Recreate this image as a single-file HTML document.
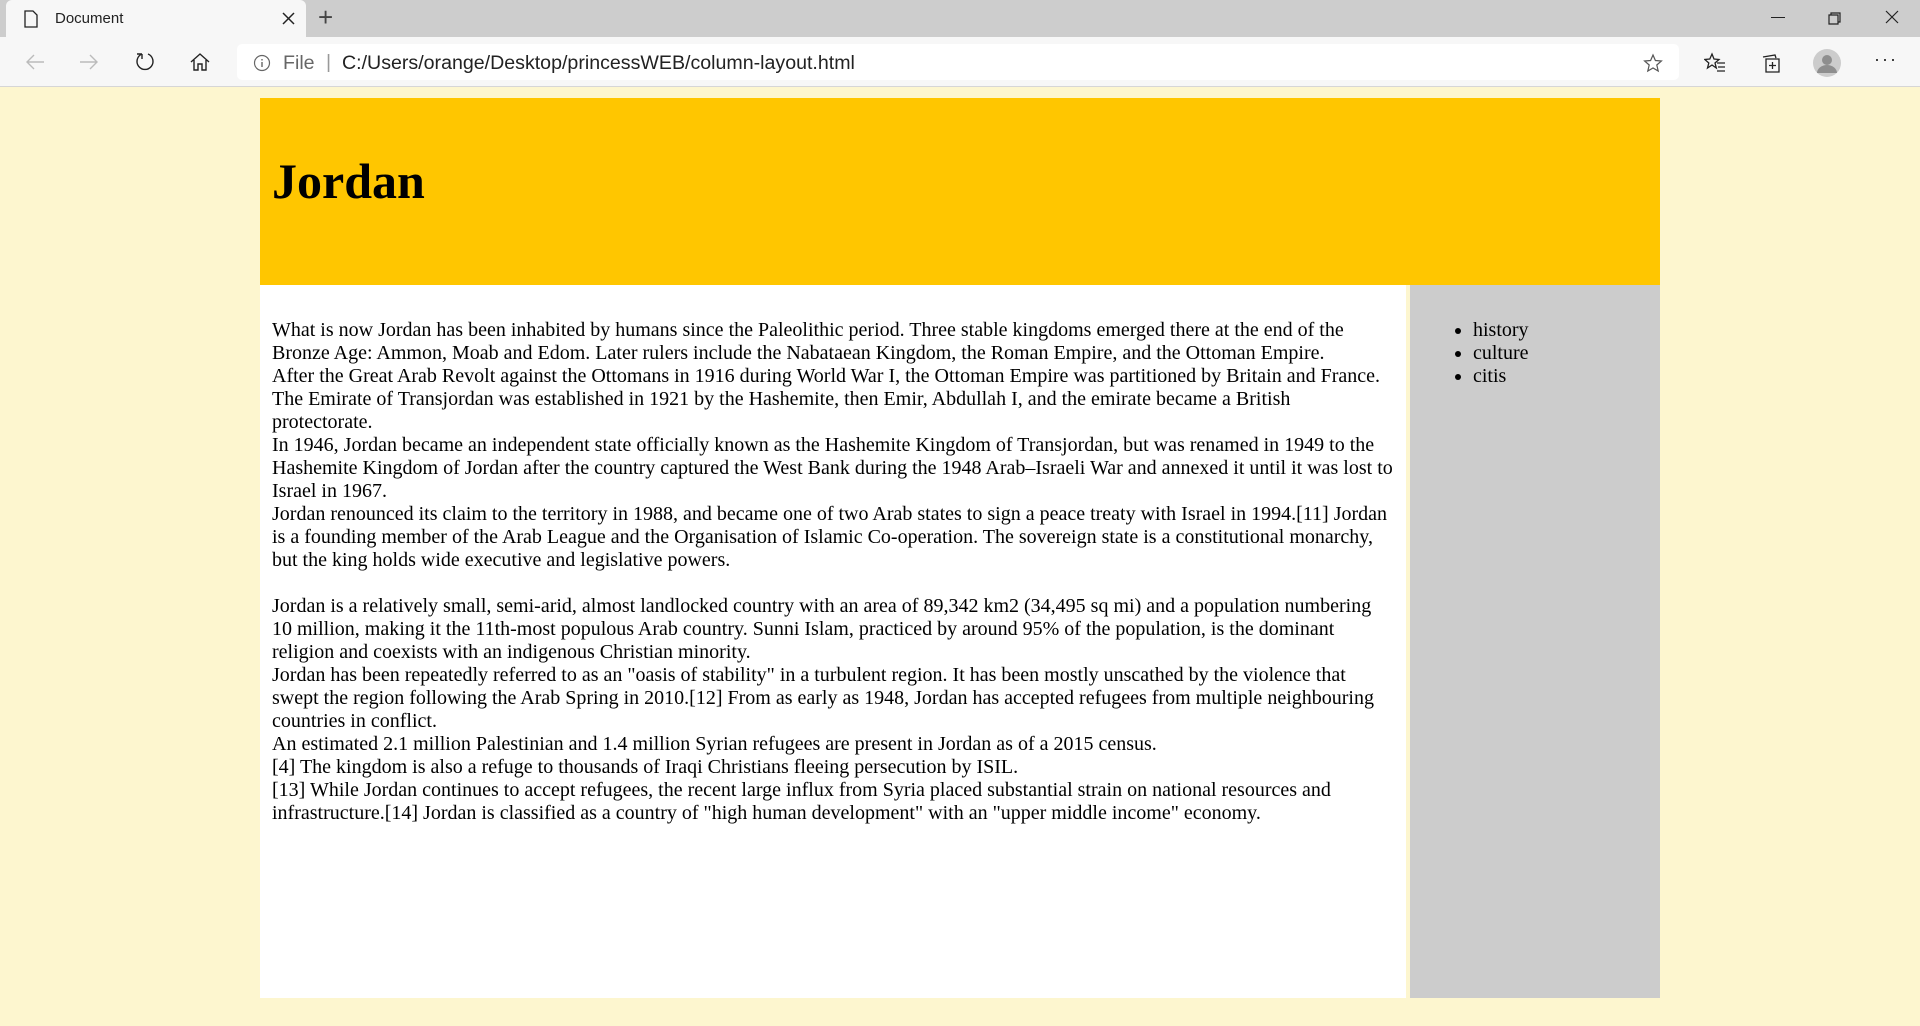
<!DOCTYPE html>
<html><head><meta charset="utf-8"><style>
*{margin:0;padding:0;box-sizing:border-box}
html,body{width:1920px;height:1026px;overflow:hidden;background:#fdf6cf;font-family:"Liberation Serif",serif}
.tabbar{position:absolute;left:0;top:0;width:1920px;height:37px;background:#cdcdcd}
.tab{position:absolute;left:6px;top:0;width:300px;height:38px;background:#f7f7f7;border-radius:6px 6px 0 0;font-family:"Liberation Sans",sans-serif;font-size:15px;color:#222}
.nav{position:absolute;left:0;top:37px;width:1920px;height:50px;background:#f7f7f7;border-bottom:1px solid #d6d6d6}
.addr{position:absolute;left:237px;top:7px;width:1442px;height:36px;background:#fff;border-radius:5px;font-family:"Liberation Sans",sans-serif;font-size:19.6px;color:#222}
.ic{position:absolute}
.header{position:absolute;left:260px;top:98px;width:1400px;height:187px;background:#ffc600}
.header h1{position:absolute;left:12px;top:55px;font-size:50px;line-height:56px;font-weight:bold;color:#000}
.main{position:absolute;left:260px;top:285px;width:1146px;height:713px;background:#fff}
.side{position:absolute;left:1410px;top:285px;width:250px;height:713px;background:#cccccc}
.txt{position:absolute;left:12px;top:34px;font-size:20px;line-height:23px;white-space:nowrap;color:#000}
.side ul{position:absolute;left:63px;top:34px;font-size:20px;line-height:23px;list-style:disc}
</style></head><body>
<div class="tabbar">
 <div class="tab">
  <svg class="ic" style="left:18px;top:10px" width="14" height="18" viewBox="0 0 14 18"><path d="M1 1h8l4 4v12H1z" fill="none" stroke="#222" stroke-width="1.3"/></svg>
  <span style="position:absolute;left:49px;top:10px">Document</span>
  <svg class="ic" style="left:276px;top:12px" width="13" height="13"><path d="M1 1l11 11M12 1L1 12" stroke="#222" stroke-width="1.5"/></svg>
 </div>
 <span style="position:absolute;left:318px;top:2px;font-family:'Liberation Sans';font-size:26px;color:#444">+</span>
 <div style="position:absolute;left:1771px;top:17px;width:14px;height:1px;background:#222"></div>
 <svg class="ic" style="left:1826px;top:10px" width="16" height="16"><path d="M3 5h9v9H3zM5 5V3h9v9h-2" fill="none" stroke="#222" stroke-width="1.2"/></svg>
 <svg class="ic" style="left:1884px;top:9px" width="16" height="16"><path d="M2 2l12 12M14 2L2 14" stroke="#222" stroke-width="1.2"/></svg>
</div>
<div class="nav">
 <svg class="ic" style="left:24px;top:15px" width="22" height="20"><path d="M20 10H3M10 3l-7 7 7 7" fill="none" stroke="#bbb" stroke-width="1.4"/></svg>
 <svg class="ic" style="left:78px;top:15px" width="22" height="20"><path d="M2 10h17M12 3l7 7-7 7" fill="none" stroke="#bbb" stroke-width="1.4"/></svg>
 <svg class="ic" style="left:134px;top:14px" width="22" height="22"><path d="M8 3A8 8 0 1 0 14 3M8 3V8M8 3H3" fill="none" stroke="#222" stroke-width="1.4"/></svg>
 <svg class="ic" style="left:189px;top:14px" width="22" height="22"><path d="M2 11L11 3l9 8M5 9v10h4v-6h4v6h4V9" fill="none" stroke="#222" stroke-width="1.4"/></svg>
 <div class="addr">
  <svg class="ic" style="left:16px;top:10px" width="18" height="18"><circle cx="9" cy="9" r="7.5" fill="none" stroke="#666" stroke-width="1.2"/><path d="M9 8v5M9 5v1.5" stroke="#666" stroke-width="1.4"/></svg>
  <span style="position:absolute;left:46px;top:8px;color:#666">File</span>
  <span style="position:absolute;left:89px;top:7px;color:#999">|</span>
  <span style="position:absolute;left:105px;top:8px">C:/Users/orange/Desktop/princessWEB/column-layout.html</span>
  <svg class="ic" style="left:1406px;top:9px" width="22" height="22"><path d="M10 2l2.4 5.5 6 .5-4.6 4 1.4 6L10 15l-5.2 3 1.4-6-4.6-4 6-.5z" fill="none" stroke="#555" stroke-width="1.2"/></svg>
 </div>
 <svg class="ic" style="left:1704px;top:15px" width="22" height="22"><path d="M8 2l2 5 5 .5-4 3.5 1.3 5L8 13l-4.5 3 1.3-5-4-3.5 5-.5zM13 11h8M14 15h7M13 19h8" fill="none" stroke="#222" stroke-width="1.3"/></svg>
 <svg class="ic" style="left:1760px;top:15px" width="22" height="22"><path d="M3 5l12-2 1 3M6 7h13v13H6zM12.5 10v7M9 13.5h7" fill="none" stroke="#222" stroke-width="1.3"/></svg>
 <svg class="ic" style="left:1813px;top:12px" width="28" height="28"><circle cx="14" cy="14" r="14" fill="#ccc"/><circle cx="14" cy="11" r="5" fill="#8e8e8e"/><path d="M4 24a10 8 0 0 1 20 0" fill="#8e8e8e"/></svg>
 <span style="position:absolute;left:1874px;top:12px;font-family:'Liberation Sans';font-size:18px;color:#222;letter-spacing:2px">···</span>
</div>
<div class="header"><h1>Jordan</h1></div>
<div class="main"><div class="txt">What is now Jordan has been inhabited by humans since the Paleolithic period. Three stable kingdoms emerged there at the end of the<br>Bronze Age: Ammon, Moab and Edom. Later rulers include the Nabataean Kingdom, the Roman Empire, and the Ottoman Empire.<br>After the Great Arab Revolt against the Ottomans in 1916 during World War I, the Ottoman Empire was partitioned by Britain and France.<br>The Emirate of Transjordan was established in 1921 by the Hashemite, then Emir, Abdullah I, and the emirate became a British<br>protectorate.<br>In 1946, Jordan became an independent state officially known as the Hashemite Kingdom of Transjordan, but was renamed in 1949 to the<br>Hashemite Kingdom of Jordan after the country captured the West Bank during the 1948 Arab–Israeli War and annexed it until it was lost to<br>Israel in 1967.<br>Jordan renounced its claim to the territory in 1988, and became one of two Arab states to sign a peace treaty with Israel in 1994.[11] Jordan<br>is a founding member of the Arab League and the Organisation of Islamic Co-operation. The sovereign state is a constitutional monarchy,<br>but the king holds wide executive and legislative powers.<br><br>Jordan is a relatively small, semi-arid, almost landlocked country with an area of 89,342 km2 (34,495 sq mi) and a population numbering<br>10 million, making it the 11th-most populous Arab country. Sunni Islam, practiced by around 95% of the population, is the dominant<br>religion and coexists with an indigenous Christian minority.<br>Jordan has been repeatedly referred to as an "oasis of stability" in a turbulent region. It has been mostly unscathed by the violence that<br>swept the region following the Arab Spring in 2010.[12] From as early as 1948, Jordan has accepted refugees from multiple neighbouring<br>countries in conflict.<br>An estimated 2.1 million Palestinian and 1.4 million Syrian refugees are present in Jordan as of a 2015 census.<br>[4] The kingdom is also a refuge to thousands of Iraqi Christians fleeing persecution by ISIL.<br>[13] While Jordan continues to accept refugees, the recent large influx from Syria placed substantial strain on national resources and<br>infrastructure.[14] Jordan is classified as a country of "high human development" with an "upper middle income" economy.</div></div>
<div class="side"><ul><li>history</li><li>culture</li><li>citis</li></ul></div>
</body></html>
